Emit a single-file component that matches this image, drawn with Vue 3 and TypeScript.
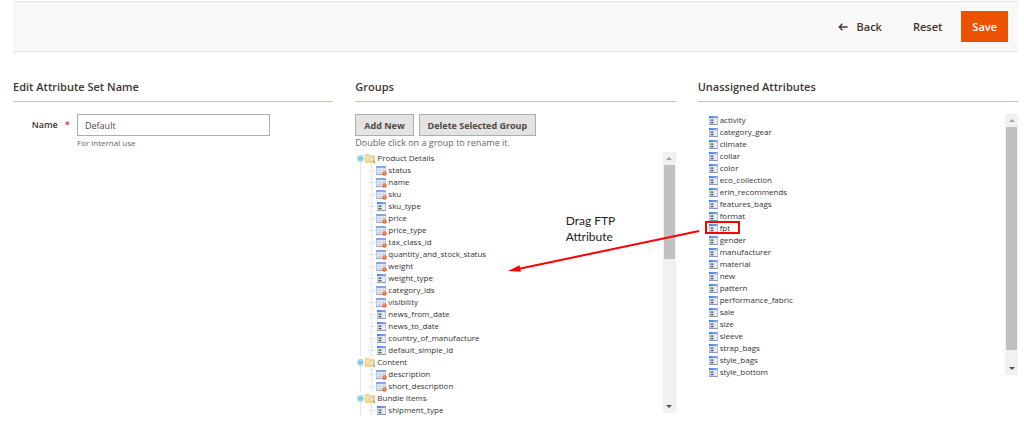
<script setup lang="ts">
import { ref } from 'vue'

interface Item { name: string; locked?: boolean }
interface Group { name: string; items: Item[] }

const setName = ref('Default')

const locked = (name: string): Item => ({ name, locked: true })
const open = (name: string): Item => ({ name })

const groups = ref<Group[]>([
  {
    name: 'Product Details',
    items: [
      locked('status'), locked('name'), locked('sku'), open('sku_type'),
      locked('price'), locked('price_type'), locked('tax_class_id'),
      locked('quantity_and_stock_status'), locked('weight'), open('weight_type'),
      locked('category_ids'), locked('visibility'), open('news_from_date'),
      open('news_to_date'), open('country_of_manufacture'), open('default_simple_id'),
    ],
  },
  { name: 'Content', items: [locked('description'), locked('short_description')] },
  { name: 'Bundle Items', items: [open('shipment_type')] },
])

const unassigned: string[] = [
  'activity', 'category_gear', 'climate', 'collar', 'color', 'eco_collection',
  'erin_recommends', 'features_bags', 'format', 'fpt', 'gender', 'manufacturer',
  'material', 'new', 'pattern', 'performance_fabric', 'sale', 'size', 'sleeve',
  'strap_bags', 'style_bags', 'style_bottom',
]
</script>

<template>
  <div class="page">
    <svg class="defs" aria-hidden="true">
      <defs>
        <linearGradient id="bar" x1="0" x2="1" y1="0" y2="0">
          <stop offset="0" stop-color="#4a7fe0" />
          <stop offset="1" stop-color="#86acf2" />
        </linearGradient>
        <symbol id="attr" viewBox="0 0 11 11">
          <rect x="1" y="1" width="9" height="9" fill="#dfe4ec" />
          <path d="M1.500 3v7M9.500 3v7" stroke="#b9c4d6" />
          <path d="M1 9.500h9" stroke="#8e9bb3" />
          <rect x="1" y="1" width="9" height="2" fill="url(#bar)" />
          <path d="M2.600 5.200h2.800M2.600 7.600h2.800" stroke="#4a4f59" stroke-width="1.200" />
          <path d="M6.200 5.200h2.600M6.200 7.600h2.600" stroke="#f8fafc" stroke-width="1.200" />
        </symbol>
        <symbol id="attr-locked" viewBox="0 0 11 11">
          <rect x="0" y="1" width="10" height="9" fill="#e2eaf6" />
          <path d="M0.500 3v7M9.500 3v4" stroke="#b5c8e6" />
          <path d="M0 9.500h7" stroke="#93a5c4" />
          <rect x="0" y="1" width="10" height="2" fill="#85a9e8" />
          <path d="M2 5.200h3M2 7.500h3M6 5.200h2.600" stroke="#bcc6d6" />
          <circle cx="8.500" cy="8.500" r="2.300" fill="#ea6f35" />
          <circle cx="8.200" cy="7.900" r="0.900" fill="#f79a66" />
        </symbol>
        <symbol id="folder" viewBox="0 0 11 11">
          <path d="M0.500 9.500V1.500h3.600l1 1.200h4.400v6.800z" fill="#fbdd92" stroke="#f0cf80" />
          <path d="M1 4.200h3" stroke="#fff0bf" />
          <circle cx="6.400" cy="6" r="2.200" fill="#ece9cf" stroke="#c9c5a0" stroke-width="0.700" />
          <path d="M8.200 7.800l2 2.200" stroke="#8fb4dc" stroke-width="1.400" />
        </symbol>
        <symbol id="minus" viewBox="0 0 7 7">
          <circle cx="3.500" cy="3.500" r="3.400" fill="#9ddbe8" />
          <path d="M1.600 3.500h3.800" stroke="#58b2c8" stroke-width="1.200" />
        </symbol>
      </defs>
    </svg>

    <header class="toolbar">
      <button type="button" class="link">
        <svg class="arrow-left" viewBox="0 0 10 8" aria-hidden="true">
          <path d="M9.500 4H1.200M4.400 0.800L1.200 4l3.200 3.200" fill="none" stroke="#41362f" stroke-width="1.300" />
        </svg>
        Back
      </button>
      <button type="button" class="link">Reset</button>
      <button type="button" class="save">Save</button>
    </header>

    <main class="columns">
      <section>
        <h2>Edit Attribute Set Name</h2>
        <div class="field">
          <label for="set-name">Name <span class="star">*</span></label>
          <div class="control">
            <input id="set-name" v-model="setName" type="text" aria-describedby="set-note" />
            <p id="set-note">For internal use</p>
          </div>
        </div>
      </section>

      <section>
        <h2>Groups</h2>
        <div class="actions">
          <button type="button">Add New</button>
          <button type="button">Delete Selected Group</button>
        </div>
        <p class="hint">Double click on a group to rename it.</p>
        <div class="pane">
          <ul class="tree">
            <li v-for="group in groups" :key="group.name" class="group">
              <div class="row">
                <svg class="toggle" aria-hidden="true"><use href="#minus" /></svg>
                <svg class="icon" aria-hidden="true"><use href="#folder" /></svg>
                <span>{{ group.name }}</span>
              </div>
              <ul class="leaves">
                <li v-for="item in group.items" :key="item.name" class="row leaf">
                  <svg v-if="item.locked" class="icon" aria-hidden="true"><use href="#attr-locked" /></svg>
                  <svg v-else class="icon" aria-hidden="true"><use href="#attr" /></svg>
                  <span>{{ item.name }}</span>
                </li>
              </ul>
            </li>
          </ul>
          <div class="scroll" aria-hidden="true">
            <i class="up"></i>
            <div class="track"><div class="thumb short"></div></div>
            <i class="down"></i>
          </div>
        </div>
      </section>

      <section class="last">
        <h2>Unassigned Attributes</h2>
        <div class="pane">
          <ul class="tree free">
            <li v-for="name in unassigned" :key="name" class="row" :class="{ marked: name === 'fpt' }">
              <svg class="icon" aria-hidden="true"><use href="#attr" /></svg>
              <span>{{ name }}</span>
            </li>
          </ul>
          <div class="scroll" aria-hidden="true">
            <i class="up"></i>
            <div class="track"><div class="thumb long"></div></div>
            <i class="down"></i>
          </div>
        </div>
        <svg class="drag-arrow" viewBox="0 0 192 46" aria-hidden="true">
          <path d="M191 3L10 41" stroke="#f00" stroke-width="2" />
          <path d="M0 43L11.500 37.200L12.900 43.800z" fill="#f00" />
        </svg>
        <p class="drag-note">Drag FTP<br />Attribute</p>
      </section>
    </main>
  </div>
</template>

<style>
body {
  margin: 0;
  background: #fff;
}
</style>

<style scoped>
.page {
  padding: 1px 6px 0 13px;
  font-family: "Open Sans", "Noto Sans", sans-serif;
  font-size: 8px;
  color: #41362f;
}
.defs {
  position: absolute;
  width: 0;
  height: 0;
}
ul {
  margin: 0;
  padding: 0;
  list-style: none;
}
p {
  margin: 0;
}
button {
  font-family: inherit;
  cursor: pointer;
}
.toolbar {
  display: flex;
  align-items: center;
  justify-content: flex-end;
  gap: 31px;
  height: 49px;
  padding-right: 10px;
  background: #f8f8f8;
  border-top: 1px solid #e3e3e3;
  border-bottom: 1px solid #e3e3e3;
}
.toolbar button {
  padding: 0;
  border: 0;
  background: none;
  font-size: 11px;
  font-weight: 600;
  color: #41362f;
}
.toolbar .link {
  display: flex;
  align-items: center;
  gap: 9px;
}
.arrow-left {
  width: 10px;
  height: 8px;
}
.toolbar .save {
  height: 31px;
  margin-left: -12px;
  padding: 0 11px;
  background: #eb5202;
  color: #fff;
}
.columns {
  display: grid;
  grid-template-columns: repeat(3, minmax(0, 1fr));
  gap: 22px;
  padding-top: 27px;
}
h2 {
  margin: 0 0 12px;
  padding-bottom: 6px;
  border-bottom: 1px solid #ccc3b0;
  font-size: 11px;
  line-height: 16px;
  font-weight: 600;
  color: #41362f;
}
.field {
  display: flex;
}
label {
  flex: 0 0 64px;
  box-sizing: border-box;
  padding-right: 7px;
  text-align: right;
  font-size: 9px;
  line-height: 22px;
  font-weight: 600;
}
.star {
  margin-left: 5px;
  color: #e22626;
}
.control {
  flex: 0 1 193px;
}
input {
  display: block;
  box-sizing: border-box;
  width: 100%;
  height: 22px;
  padding: 0 7px;
  border: 1px solid #adadad;
  background: #fff;
  font-family: inherit;
  font-size: 9px;
  color: #514943;
}
.control p {
  margin-top: 1px;
  line-height: 12px;
  color: #666;
}
.actions {
  display: flex;
  gap: 5px;
}
.actions button {
  height: 22px;
  padding: 0 8px;
  border: 1px solid #adadad;
  background: #e3e3e3;
  font-size: 9px;
  font-weight: 700;
  color: #514943;
}
.hint {
  font-size: 9px;
  line-height: 14px;
  color: #666;
}
.pane {
  display: flex;
  justify-content: space-between;
  margin-top: 2px;
}
.tree {
  padding-left: 2px;
  color: #333;
}
.row {
  display: flex;
  align-items: center;
  gap: 1px;
  height: 12px;
  line-height: 12px;
  white-space: nowrap;
}
.toggle {
  width: 7px;
  height: 7px;
}
.icon {
  flex: none;
  width: 11px;
  height: 11px;
}
.leaves {
  margin-left: 14px;
  border-left: 1px dotted #ddd;
}
.leaf::before {
  content: "";
  width: 3px;
  border-top: 1px dotted #ccc;
}
.group {
  background: linear-gradient(#e6e6e6, #e6e6e6) 3px 10px / 1px 100% no-repeat;
}
.free {
  padding-left: 10px;
}
.last {
  position: relative;
}
.last .pane {
  margin-top: 0;
}
.scroll {
  display: flex;
  flex-direction: column;
  align-items: center;
  width: 13px;
  height: 261px;
  background: #f1f1f1;
}
.track {
  flex: 1;
  width: 11px;
}
.thumb {
  background: #c1c1c1;
}
.short {
  height: 40%;
}
.long {
  height: 95%;
}
.up,
.down {
  width: 0;
  margin: 5px 0;
  border: 3px solid transparent;
}
.up {
  border-top: 0;
  border-bottom-color: #a3a3a3;
}
.down {
  border-bottom: 0;
  border-top-color: #505050;
}
.marked {
  position: relative;
}
.marked::after {
  content: "";
  position: absolute;
  left: -3px;
  top: -1px;
  width: 31px;
  height: 9px;
  border: 2px solid #f00;
}
.drag-arrow {
  position: absolute;
  left: -190px;
  top: 149px;
  width: 192px;
  height: 46px;
}
.drag-note {
  position: absolute;
  left: -132px;
  top: 134px;
  font-family: Lato, sans-serif;
  font-size: 12px;
  line-height: 16px;
  color: #222;
}
</style>
